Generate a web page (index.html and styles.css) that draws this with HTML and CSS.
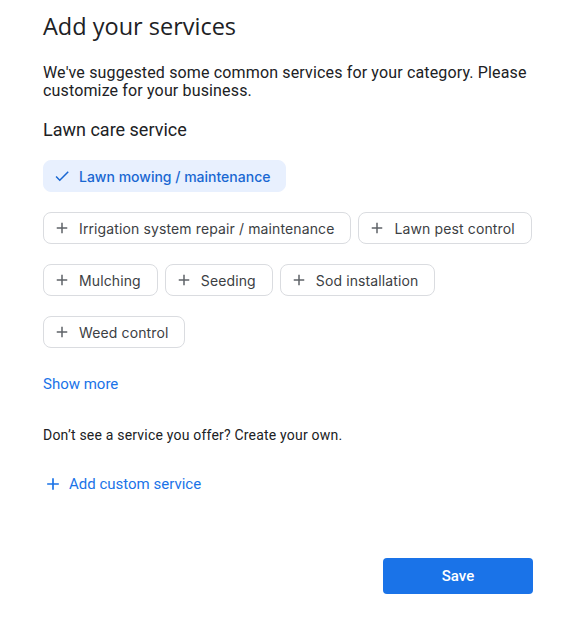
FILE: index.html
```html
<!DOCTYPE html>
<html>
<head>
<meta charset="utf-8">
<link rel="stylesheet" href="styles.css">
</head>
<body>
<div class="page">
  <h1 class="title">Add your services</h1>
  <p class="intro">We've suggested some common services for your category. Please customize for your business.</p>
  <h2 class="category">Lawn care service</h2>
  <div class="chips">
    <div class="chip-row">
      <button class="chip selected">
        <svg class="icon" viewBox="0 0 24 24" width="18" height="18"><path d="M9 16.17 4.83 12l-1.42 1.41L9 19 21 7l-1.41-1.41z" fill="currentColor"/></svg>
        <span>Lawn mowing / maintenance</span>
      </button>
    </div>
    <div class="chip-row">
      <button class="chip"><svg class="icon" viewBox="0 0 24 24" width="18" height="18"><path d="M19 13h-6v6h-2v-6H5v-2h6V5h2v6h6z" fill="currentColor"/></svg><span>Irrigation system repair / maintenance</span></button>
      <button class="chip"><svg class="icon" viewBox="0 0 24 24" width="18" height="18"><path d="M19 13h-6v6h-2v-6H5v-2h6V5h2v6h6z" fill="currentColor"/></svg><span>Lawn pest control</span></button>
    </div>
    <div class="chip-row">
      <button class="chip"><svg class="icon" viewBox="0 0 24 24" width="18" height="18"><path d="M19 13h-6v6h-2v-6H5v-2h6V5h2v6h6z" fill="currentColor"/></svg><span>Mulching</span></button>
      <button class="chip"><svg class="icon" viewBox="0 0 24 24" width="18" height="18"><path d="M19 13h-6v6h-2v-6H5v-2h6V5h2v6h6z" fill="currentColor"/></svg><span>Seeding</span></button>
      <button class="chip"><svg class="icon" viewBox="0 0 24 24" width="18" height="18"><path d="M19 13h-6v6h-2v-6H5v-2h6V5h2v6h6z" fill="currentColor"/></svg><span>Sod installation</span></button>
    </div>
    <div class="chip-row">
      <button class="chip"><svg class="icon" viewBox="0 0 24 24" width="18" height="18"><path d="M19 13h-6v6h-2v-6H5v-2h6V5h2v6h6z" fill="currentColor"/></svg><span>Weed control</span></button>
    </div>
  </div>
  <a class="show-more">Show more</a>
  <p class="hint">Don’t see a service you offer? Create your own.</p>
  <a class="add-custom">
    <svg class="add-icon" viewBox="0 0 24 24" width="20" height="20"><path d="M19 13h-6v6h-2v-6H5v-2h6V5h2v6h6z" fill="currentColor"/></svg>
    <span>Add custom service</span>
  </a>
  <div class="actions">
    <button class="save">Save</button>
  </div>
</div>
</body>
</html>
```
FILE: styles.css
```css
html, body {
  margin: 0;
  padding: 0;
  background: #fff;
}
body {
  font-family: Roboto, "Liberation Sans", sans-serif;
  color: #202124;
}
.page {
  width: 490px;
  padding: 11px 35px 0 43px;
}
.title {
  margin: 0;
  font-family: "Open Sans", Roboto, sans-serif;
  font-weight: 400;
  font-size: 23.5px;
  line-height: 30px;
  color: #202124;
}
.intro {
  margin: 23px 0 0;
  font-size: 16px;
  line-height: 18px;
  letter-spacing: 0.15px;
}
.category {
  margin: 20px 0 0;
  font-weight: 400;
  font-size: 18px;
  line-height: 20px;
}
.chips {
  margin-top: 20px;
  display: flex;
  flex-direction: column;
  gap: 20px;
}
.chip-row {
  display: flex;
  gap: 7px;
}
.chip {
  display: inline-flex;
  align-items: center;
  gap: 8px;
  height: 32px;
  box-sizing: border-box;
  padding: 0 16px 0 9px;
  border: 1px solid #dadce0;
  border-radius: 8px;
  background: #fff;
  font-family: Inter, Roboto, sans-serif;
  font-size: 14px;
  font-weight: 400;
  letter-spacing: 0.12px;
  color: #3c4043;
  cursor: pointer;
}
.chip .icon {
  color: #5f6368;
}
.chip.selected {
  border-color: #e8f0fe;
  background: #e8f0fe;
  color: #1967d2;
  font-weight: 500;
  letter-spacing: 0;
  padding-right: 15px;
}
.chip.selected .icon {
  color: #1967d2;
}
.show-more {
  display: block;
  margin-top: 26px;
  font-size: 15px;
  line-height: 20px;
  color: #1a73e8;
  font-weight: 400;
}
.hint {
  margin: 31px 0 0;
  font-size: 14px;
  line-height: 20px;
  letter-spacing: 0.2px;
}
.add-custom {
  margin-top: 29px;
  display: flex;
  align-items: center;
  gap: 6px;
  color: #1a73e8;
  font-size: 15px;
  line-height: 20px;
}
.actions {
  margin-top: 64px;
  display: flex;
  justify-content: flex-end;
}
.save {
  width: 150px;
  height: 36px;
  border: none;
  border-radius: 4px;
  background: #1a73e8;
  color: #fff;
  font-family: Roboto, sans-serif;
  font-size: 15px;
  font-weight: 500;
}
```
